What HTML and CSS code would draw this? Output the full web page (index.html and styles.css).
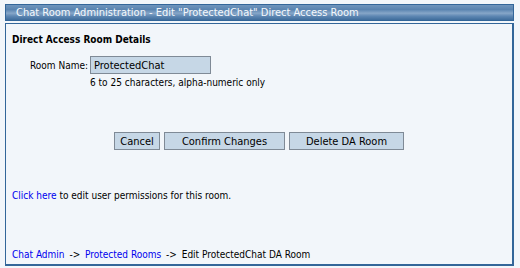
FILE: index.html
```html
<!DOCTYPE html>
<html lang="en">
<head>
    <meta charset="UTF-8">
    <title>Chat Room Administration</title>
    <link rel="stylesheet" href="styles.css">
</head>
<body>
    <div class="page">
        <div class="titlebar">Chat Room Administration - Edit "ProtectedChat" Direct Access Room</div>
        <div class="panel">
            <div class="section-title">Direct Access Room Details</div>
            <div class="field">
                <label class="field-label" for="roomname">Room Name:</label>
                <div class="field-body">
                    <input id="roomname" class="text-input" type="text" value="ProtectedChat">
                    <div class="hint">6 to 25 characters, alpha-numeric only</div>
                </div>
            </div>
            <div class="buttons">
                <button class="btn btn-cancel">Cancel</button>
                <button class="btn btn-confirm">Confirm Changes</button>
                <button class="btn btn-delete">Delete DA Room</button>
            </div>
            <div class="permissions">
                <a href="#">Click here</a> to edit user permissions for this room.
            </div>
            <div class="crumbs">
                <a href="#">Chat Admin</a> <span class="sep">-&gt;</span>
                <a href="#">Protected Rooms</a> <span class="sep">-&gt;</span>
                Edit ProtectedChat DA Room
            </div>
        </div>
    </div>
</body>
</html>
```

FILE: styles.css
```css
body {
    margin: 0;
    background-color: #f2f6fa;
    font-family: "DejaVu Sans Condensed", "DejaVu Sans", Verdana, sans-serif;
    font-size: 10px;
    color: #000;
}

.page {
    padding: 4px 6px 0 5px;
    display: flex;
    flex-direction: column;
    gap: 2px;
}

.titlebar {
    height: 15px;
    line-height: 15px;
    border: 1px solid #336699;
    background: linear-gradient(#6f95bd 0%, #5a84b0 30%, #86a6c8 55%, #5d86b2 75%, #3f6d9c 100%);
    color: #f4f8fc;
    font-size: 11px;
    padding-left: 10px;
    white-space: nowrap;
}

.panel {
    height: 226px;
    border: 2px solid #336699;
    border-width: 1px 2px 2px 1px;
    padding: 10px 6px 4px 6px;
    display: flex;
    flex-direction: column;
}

.section-title {
    font-weight: bold;
    font-size: 10px;
}

.field {
    display: flex;
    margin-top: 11px;
    padding-left: 18px;
}

.field-label {
    width: 60px;
    padding-top: 4px;
}

.text-input {
    box-sizing: border-box;
    width: 121px;
    height: 18px;
    margin: 0;
    padding: 0 3px;
    border: 1px solid #7f8a96;
    background-color: #c6d7e6;
    font-family: "DejaVu Sans Condensed", "DejaVu Sans", Verdana, sans-serif;
    font-size: 11px;
}

.hint {
    margin-top: 3px;
}

.buttons {
    display: flex;
    justify-content: center;
    gap: 4px;
    margin-top: 44px;
}

.btn {
    box-sizing: border-box;
    height: 18px;
    margin: 0;
    padding: 0;
    border: 1px solid #7f8a96;
    background-color: #c6d7e6;
    font-family: "DejaVu Sans Condensed", "DejaVu Sans", Verdana, sans-serif;
    font-size: 11px;
    color: #000;
}

.btn-cancel { width: 46px; }
.btn-confirm { width: 121px; }
.btn-delete { width: 115px; }

.permissions {
    margin-top: 40px;
}

.crumbs {
    margin-top: auto;
}

.crumbs .sep {
    padding: 0 2px;
}

a {
    color: #0000ee;
    text-decoration: none;
}
```
